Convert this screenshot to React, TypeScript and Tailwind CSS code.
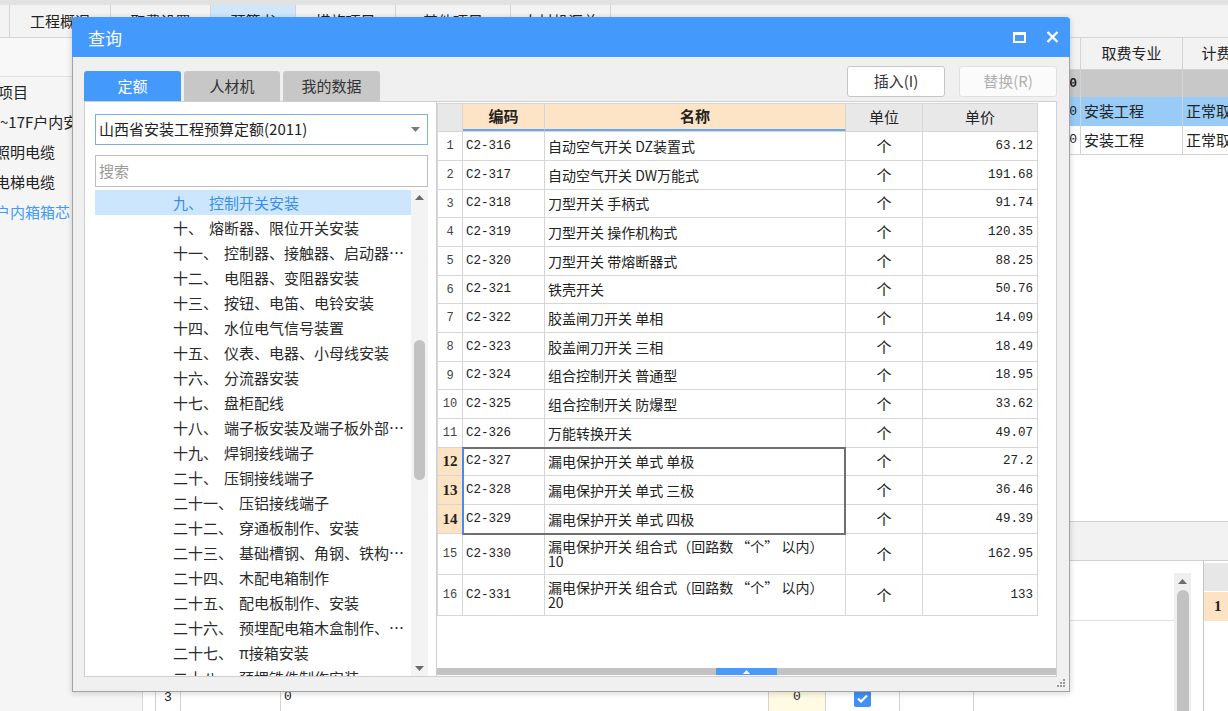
import React from "react";

const TOP_TABS: { label: string; w: string; active?: boolean }[] = [
  { label: "", w: "w-[10px]" },
  { label: "工程概况", w: "w-[101px]" },
  { label: "取费设置", w: "w-[100px]" },
  { label: "预算书", w: "w-[85px]", active: true },
  { label: "措施项目", w: "w-[100px]" },
  { label: "其他项目", w: "w-[115px]" },
  { label: "人材机汇总", w: "w-[100px]" },
];

const NAV: { text: string; cls: string }[] = [
  { text: "项目", cls: "-ml-[2px] text-[#222]" },
  { text: "~17F户内安装", cls: "ml-0 text-[#222]" },
  { text: "照明电缆", cls: "-ml-[5px] text-[#222]" },
  { text: "电梯电缆", cls: "-ml-[5px] text-[#222]" },
  { text: "户内箱箱芯", cls: "-ml-[5px] text-[#3c9aff]" },
];

const TREE: [string, string][] = [
  ["九、", "控制开关安装"],
  ["十、", "熔断器、限位开关安装"],
  ["十一、", "控制器、接触器、启动器、电磁铁、电磁制动器安装"],
  ["十二、", "电阻器、变阻器安装"],
  ["十三、", "按钮、电笛、电铃安装"],
  ["十四、", "水位电气信号装置"],
  ["十五、", "仪表、电器、小母线安装"],
  ["十六、", "分流器安装"],
  ["十七、", "盘柜配线"],
  ["十八、", "端子板安装及端子板外部接线"],
  ["十九、", "焊铜接线端子"],
  ["二十、", "压铜接线端子"],
  ["二十一、", "压铝接线端子"],
  ["二十二、", "穿通板制作、安装"],
  ["二十三、", "基础槽钢、角钢、铁构件制作安装"],
  ["二十四、", "木配电箱制作"],
  ["二十五、", "配电板制作、安装"],
  ["二十六、", "预埋配电箱木盒制作、安装"],
  ["二十七、", "π接箱安装"],
  ["二十八、", "预埋铁件制作安装"],
];

const ROWS: [string, string, string][] = [
  ["C2-316", "自动空气开关 DZ装置式", "63.12"],
  ["C2-317", "自动空气开关 DW万能式", "191.68"],
  ["C2-318", "刀型开关 手柄式", "91.74"],
  ["C2-319", "刀型开关 操作机构式", "120.35"],
  ["C2-320", "刀型开关 带熔断器式", "88.25"],
  ["C2-321", "铁壳开关", "50.76"],
  ["C2-322", "胶盖闸刀开关 单相", "14.09"],
  ["C2-323", "胶盖闸刀开关 三相", "18.49"],
  ["C2-324", "组合控制开关 普通型", "18.95"],
  ["C2-325", "组合控制开关 防爆型", "33.62"],
  ["C2-326", "万能转换开关", "49.07"],
  ["C2-327", "漏电保护开关 单式 单极", "27.2"],
  ["C2-328", "漏电保护开关 单式 三极", "36.46"],
  ["C2-329", "漏电保护开关 单式 四极", "49.39"],
  ["C2-330", "漏电保护开关 组合式（回路数 “个” 以内）\n10", "162.95"],
  ["C2-331", "漏电保护开关 组合式（回路数 “个” 以内）\n20", "133"],
];

const MONO = "font-['Liberation_Mono','Noto_Sans_CJK_SC',monospace]";

function Tri({ up, cls }: { up?: boolean; cls: string }) {
  return (
    <svg width="9" height="5" viewBox="0 0 9 5" className={cls}>
      <polygon points={up ? "0,5 4.5,0 9,5" : "0,0 9,0 4.5,5"} />
    </svg>
  );
}

function LeftNav() {
  return (
    <div className="flex w-[143px] shrink-0 flex-col overflow-hidden border-r border-[#d8d8d8] bg-[#f5f5f5] text-[15px]">
      <div className="h-[39px] shrink-0 border-b border-[#e2e2e2] bg-[#f8f8f8]" />
      {NAV.map((n) => (
        <div key={n.text} className="flex h-[30px] shrink-0 items-center whitespace-nowrap">
          <span className={n.cls}>{n.text}</span>
        </div>
      ))}
    </div>
  );
}

function Workspace() {
  const cell = "flex h-full items-center border-r border-[#d3d3d3]";
  return (
    <div className="flex min-w-0 flex-1 flex-col overflow-hidden">
      {/* upper grid */}
      <div className="h-[483px] shrink-0 overflow-hidden border-l border-[#d0d0d0] bg-white text-[15px]">
        <div className="w-[1125px]">
          <div className="flex h-[32px] border-b border-[#d3d3d3] bg-[#f2f2f2]">
            <div className={`${cell} flex-1`} />
            <div className={`${cell} w-[102px] justify-center`}>取费专业</div>
            <div className={`${cell} w-[98px] justify-center`}>计费方式</div>
          </div>
          <div className="flex h-[27px] bg-[#c8c8c8]">
            <div className={`${cell} flex-1 justify-end pr-[3px] text-[13px] font-bold ${MONO}`}>0</div>
            <div className={`${cell} w-[102px]`} />
            <div className={`${cell} w-[98px]`} />
          </div>
          <div className="flex h-[29px] bg-[#98cbf6]">
            <div className={`${cell} flex-1 justify-end pr-[3px] text-[13px] ${MONO}`}>0</div>
            <div className={`${cell} w-[102px] pl-[3px]`}>安装工程</div>
            <div className={`${cell} w-[98px] pl-[3px]`}>正常取费</div>
          </div>
          <div className="flex h-[29px] border-b border-[#d3d3d3]">
            <div className={`${cell} flex-1 justify-end pr-[3px] text-[13px] ${MONO}`}>0</div>
            <div className={`${cell} w-[102px] pl-[3px]`}>安装工程</div>
            <div className={`${cell} w-[98px] pl-[3px]`}>正常取费</div>
          </div>
        </div>
      </div>
      {/* splitter band */}
      <div className="h-[40px] shrink-0 border-y border-[#d0d0d0] bg-[#f2f2f2]" />
      {/* lower grid */}
      <div className="flex min-h-0 flex-1 bg-white">
        <div className="flex min-w-0 flex-1 flex-col border-l border-[#d0d0d0] text-[14px]">
          <div className="h-[30px] shrink-0" />
          <div className="h-[30px] shrink-0 border-b border-[#e0e0e0]" />
          {["1", "2", "3"].map((n) => (
            <div key={n} className="flex h-[34px] shrink-0">
              <div className={`w-[25px] shrink-0 border-r border-[#d3d3d3] text-center text-[13px] leading-[18px] ${MONO}`}>{n}</div>
              <div className="w-[100px] shrink-0 border-r border-[#d3d3d3]" />
              <div className={`w-[488px] shrink-0 border-r border-[#d3d3d3] pl-[3px] text-[13px] leading-[16px] ${MONO}`}>0</div>
              <div className={`w-[57px] shrink-0 border-r border-[#d3d3d3] bg-[#fffbe3] text-center text-[13px] leading-[16px] ${MONO}`}>0</div>
              <div className="flex w-[74px] shrink-0 justify-center border-r border-[#d3d3d3] pt-[1px]">
                <div className="flex h-[17px] w-[17px] items-center justify-center rounded-[2px] bg-[#3f8ff5]">
                  <svg width="11" height="9" viewBox="0 0 11 9">
                    <path d="M1 4.5 L4 7.5 L10 1.5" stroke="white" strokeWidth="2.2" fill="none" />
                  </svg>
                </div>
              </div>
              <div className="w-[74px] shrink-0 border-r border-[#d3d3d3]" />
              <div className="flex-1" />
            </div>
          ))}
        </div>
        <div className="mt-[12px] flex w-[17px] shrink-0 flex-col items-center bg-[#efefef]">
          <div className="flex h-[17px] items-center">
            <Tri up cls="fill-[#6d6d6d]" />
          </div>
          <div className="w-[12px] flex-1 rounded-t-full bg-[#c2c2c2]" />
        </div>
        <div className="w-[12px] shrink-0" />
        <div className="flex w-[25px] shrink-0 flex-col border-l border-[#c6c6c6]">
          <div className="mt-[2px] h-[28px] bg-[#e7e7e7]" />
          <div className="mt-[1px] flex h-[29px] items-center bg-[#fde3c3] pl-[10px] text-[15px] font-bold font-['Liberation_Serif',serif]">
            1
          </div>
        </div>
      </div>
    </div>
  );
}

function TableRow({ i, row }: { i: number; row: [string, string, string] }) {
  const sel = i >= 11 && i <= 13;
  const h = i >= 14 ? "h-[41px]" : i % 3 === 2 ? "h-[28px]" : "h-[29px]";
  const line = "border-r border-[#d6d6d6]";
  return (
    <div className={`flex ${h} border-b border-[#d6d6d6]`}>
      <div
        className={`flex w-[25px] shrink-0 items-center justify-center ${line} ${
          sel
            ? "bg-[#fde3c3] text-[15px] font-bold text-[#222] font-['Liberation_Serif',serif]"
            : `text-[12px] text-[#444] ${MONO}`
        }`}
      >
        {i + 1}
      </div>
      <div className={`flex w-[82px] shrink-0 items-center pl-[3px] text-[12.5px] ${MONO} ${line}`}>{row[0]}</div>
      <div className={`flex w-[301px] shrink-0 items-center whitespace-pre-line pl-[3px] text-[14px] leading-[15px] ${line}`}>
        {row[1]}
      </div>
      <div className={`flex w-[77px] shrink-0 items-center justify-center text-[15px] ${line}`}>个</div>
      <div className={`flex w-[115px] shrink-0 items-center justify-end pr-[4px] text-[12.5px] ${MONO} ${line}`}>{row[2]}</div>
    </div>
  );
}

function QueryDialog() {
  return (
    <div className="absolute left-[72px] top-[17px] flex h-[675px] w-[998px] flex-col rounded-t-[4px] border border-t-0 border-[#a3a3a3] bg-[#f0f0f0] shadow-[0_1px_6px_rgba(0,0,0,0.18)]">
      <div className="-mx-px flex h-[40px] shrink-0 items-center rounded-t-[4px] bg-[#4499fd] pl-[16px] pr-[11px] text-[17px] text-white">
        <span className="leading-none">查询</span>
        <div className="flex-1" />
        <svg width="13" height="11" viewBox="0 0 13 11">
          <rect x="1" y="1.5" width="11" height="8.5" stroke="white" strokeWidth="2" fill="none" />
          <rect x="0" y="0" width="13" height="3" fill="white" />
        </svg>
        <svg width="13" height="12" viewBox="0 0 13 12" className="ml-[20px]">
          <path d="M1.5 1 L11.5 11 M11.5 1 L1.5 11" stroke="white" strokeWidth="2.4" />
        </svg>
      </div>

      <div className="flex min-h-0 flex-1 pb-[14px] pl-[11px] pr-[12px]">
        {/* left: quota tree */}
        <div className="flex w-[353px] shrink-0 flex-col pt-[14px]">
          <div className="flex h-[30px] shrink-0 gap-[3px] text-[15px]">
            <div className="flex w-[97px] items-center justify-center rounded-t-[3px] bg-[#4499fd] text-white">定额</div>
            <div className="flex w-[96px] items-center justify-center rounded-t-[3px] bg-[#c7c7c7] text-[#333]">人材机</div>
            <div className="flex w-[97px] items-center justify-center rounded-t-[3px] bg-[#c7c7c7] text-[#333]">我的数据</div>
          </div>
          <div className="flex min-h-0 flex-1 flex-col border border-[#cfcfcf] bg-white pl-[10px] pr-[8px]">
            <div className="mt-[12px] flex h-[31px] shrink-0 items-center border border-[#79b1ec] pl-[3px] pr-[7px] text-[15px] text-[#222]">
              <span className="flex-1">山西省安装工程预算定额(2011)</span>
              <Tri cls="fill-[#7a7a7a]" />
            </div>
            <div className="mt-[10px] flex h-[32px] shrink-0 items-center border border-[#bdbdbd] pl-[3px] text-[15px] text-[#9a9a9a]">
              搜索
            </div>
            <div className="mt-[3px] flex min-h-0 flex-1 overflow-hidden">
              <div className="w-[316px] shrink-0 text-[15px] text-[#2a2a2a]">
                {TREE.map(([p, t], i) => (
                  <div
                    key={p}
                    className={`flex h-[25px] items-center whitespace-nowrap pl-[78px] pr-[1px] leading-[25px] ${
                      i === 0 ? "bg-[#cce7fd] text-[#3a8de6]" : ""
                    }`}
                  >
                    <span className="shrink-0">{p}</span>
                    <span className="ml-[6px] min-w-0 truncate">{t}</span>
                  </div>
                ))}
              </div>
              <div className="flex flex-1 flex-col items-center bg-[#f3f3f3]">
                <div className="flex h-[14px] shrink-0 items-center">
                  <Tri up cls="fill-[#6b6b6b]" />
                </div>
                <div className="h-[136px] shrink-0" />
                <div className="h-[140px] w-[11px] shrink-0 rounded-full bg-[#c2c2c2]" />
                <div className="flex-1" />
                <div className="flex h-[16px] shrink-0 items-center">
                  <Tri cls="fill-[#6b6b6b]" />
                </div>
              </div>
            </div>
          </div>
        </div>

        {/* right: result grid */}
        <div className="flex min-w-0 flex-1 flex-col">
          <div className="flex h-[44px] shrink-0 items-start justify-end gap-[14px] pt-[9px] text-[15px]">
            <div className="flex h-[31px] w-[98px] items-center justify-center rounded-[3px] border border-[#c6c6c6] bg-white text-[#333]">
              插入(I)
            </div>
            <div className="flex h-[31px] w-[98px] items-center justify-center rounded-[3px] border border-[#e0e0e0] bg-[#fbfbfb] text-[#b0b0b0]">
              替换(R)
            </div>
          </div>
          <div className="flex min-h-0 flex-1 flex-col border border-l-0 border-[#cfcfcf] bg-white">
            <div className="relative mt-[1px] w-[601px] border-l border-t border-[#d6d6d6] text-[#222]">
              <div className="flex h-[28px] border-b border-[#d6d6d6] text-[15px]">
                <div className="w-[25px] shrink-0 border-r border-[#d6d6d6] bg-[#e8e8e8]" />
                <div className="flex w-[82px] shrink-0 items-center justify-center border-b-2 border-r border-b-[#6aa9ee] border-r-[#d6d6d6] bg-[#fde4c6] font-bold">
                  编码
                </div>
                <div className="flex w-[301px] shrink-0 items-center justify-center border-b-2 border-r border-b-[#6aa9ee] border-r-[#d6d6d6] bg-[#fde4c6] font-bold">
                  名称
                </div>
                <div className="flex w-[77px] shrink-0 items-center justify-center border-r border-[#d6d6d6] bg-[#e8e8e8]">单位</div>
                <div className="flex w-[115px] shrink-0 items-center justify-center border-r border-[#d6d6d6] bg-[#e8e8e8]">单价</div>
              </div>
              {ROWS.map((r, i) => (
                <TableRow key={r[0]} i={i} row={r} />
              ))}
              <div className="pointer-events-none absolute left-[24px] top-[343px] h-[88px] w-[384px] border-2 border-[#6f6f6f] border-l-[#3f8ef0]" />
            </div>
            <div className="flex-1" />
            <div className="flex h-[7px] shrink-0 bg-[#c3c3c3]">
              <div className="ml-[279px] flex w-[61px] items-center justify-center bg-[#4a9bf7]">
                <svg width="7" height="4" viewBox="0 0 7 4">
                  <polygon points="0,4 3.5,0 7,4" fill="white" />
                </svg>
              </div>
            </div>
            <div className="h-[1px] shrink-0" />
          </div>
        </div>
      </div>

      <svg width="9" height="9" viewBox="0 0 9 9" className="absolute bottom-[3px] right-[3px]">
        <rect x="6" y="0" width="2" height="2" fill="#9a9a9a" />
        <rect x="3" y="3" width="2" height="2" fill="#9a9a9a" />
        <rect x="6" y="3" width="2" height="2" fill="#9a9a9a" />
        <rect x="0" y="6" width="2" height="2" fill="#9a9a9a" />
        <rect x="3" y="6" width="2" height="2" fill="#9a9a9a" />
        <rect x="6" y="6" width="2" height="2" fill="#9a9a9a" />
      </svg>
    </div>
  );
}

export default function App() {
  return (
    <div className="relative h-[711px] w-[1228px] overflow-hidden bg-[#f4f4f4] text-[#222] font-['Noto_Sans_CJK_SC','Noto_Sans',sans-serif]">
      <div className="flex h-full flex-col">
        <div className="h-[5px] shrink-0 bg-[#e2e2e2]" />
        <div className="flex h-[33px] shrink-0 border-b border-[#d4d4d4] bg-[#f3f3f3] text-[15px]">
          {TOP_TABS.map((t, i) => (
            <div
              key={i}
              className={`flex ${t.w} shrink-0 items-center justify-center border-r border-[#d4d4d4] ${
                t.active ? "bg-[#cfe6fb]" : ""
              }`}
            >
              {t.label}
            </div>
          ))}
        </div>
        <div className="flex min-h-0 flex-1">
          <LeftNav />
          <div className="w-[12px] shrink-0 bg-white" />
          <Workspace />
        </div>
      </div>
      <QueryDialog />
    </div>
  );
}
